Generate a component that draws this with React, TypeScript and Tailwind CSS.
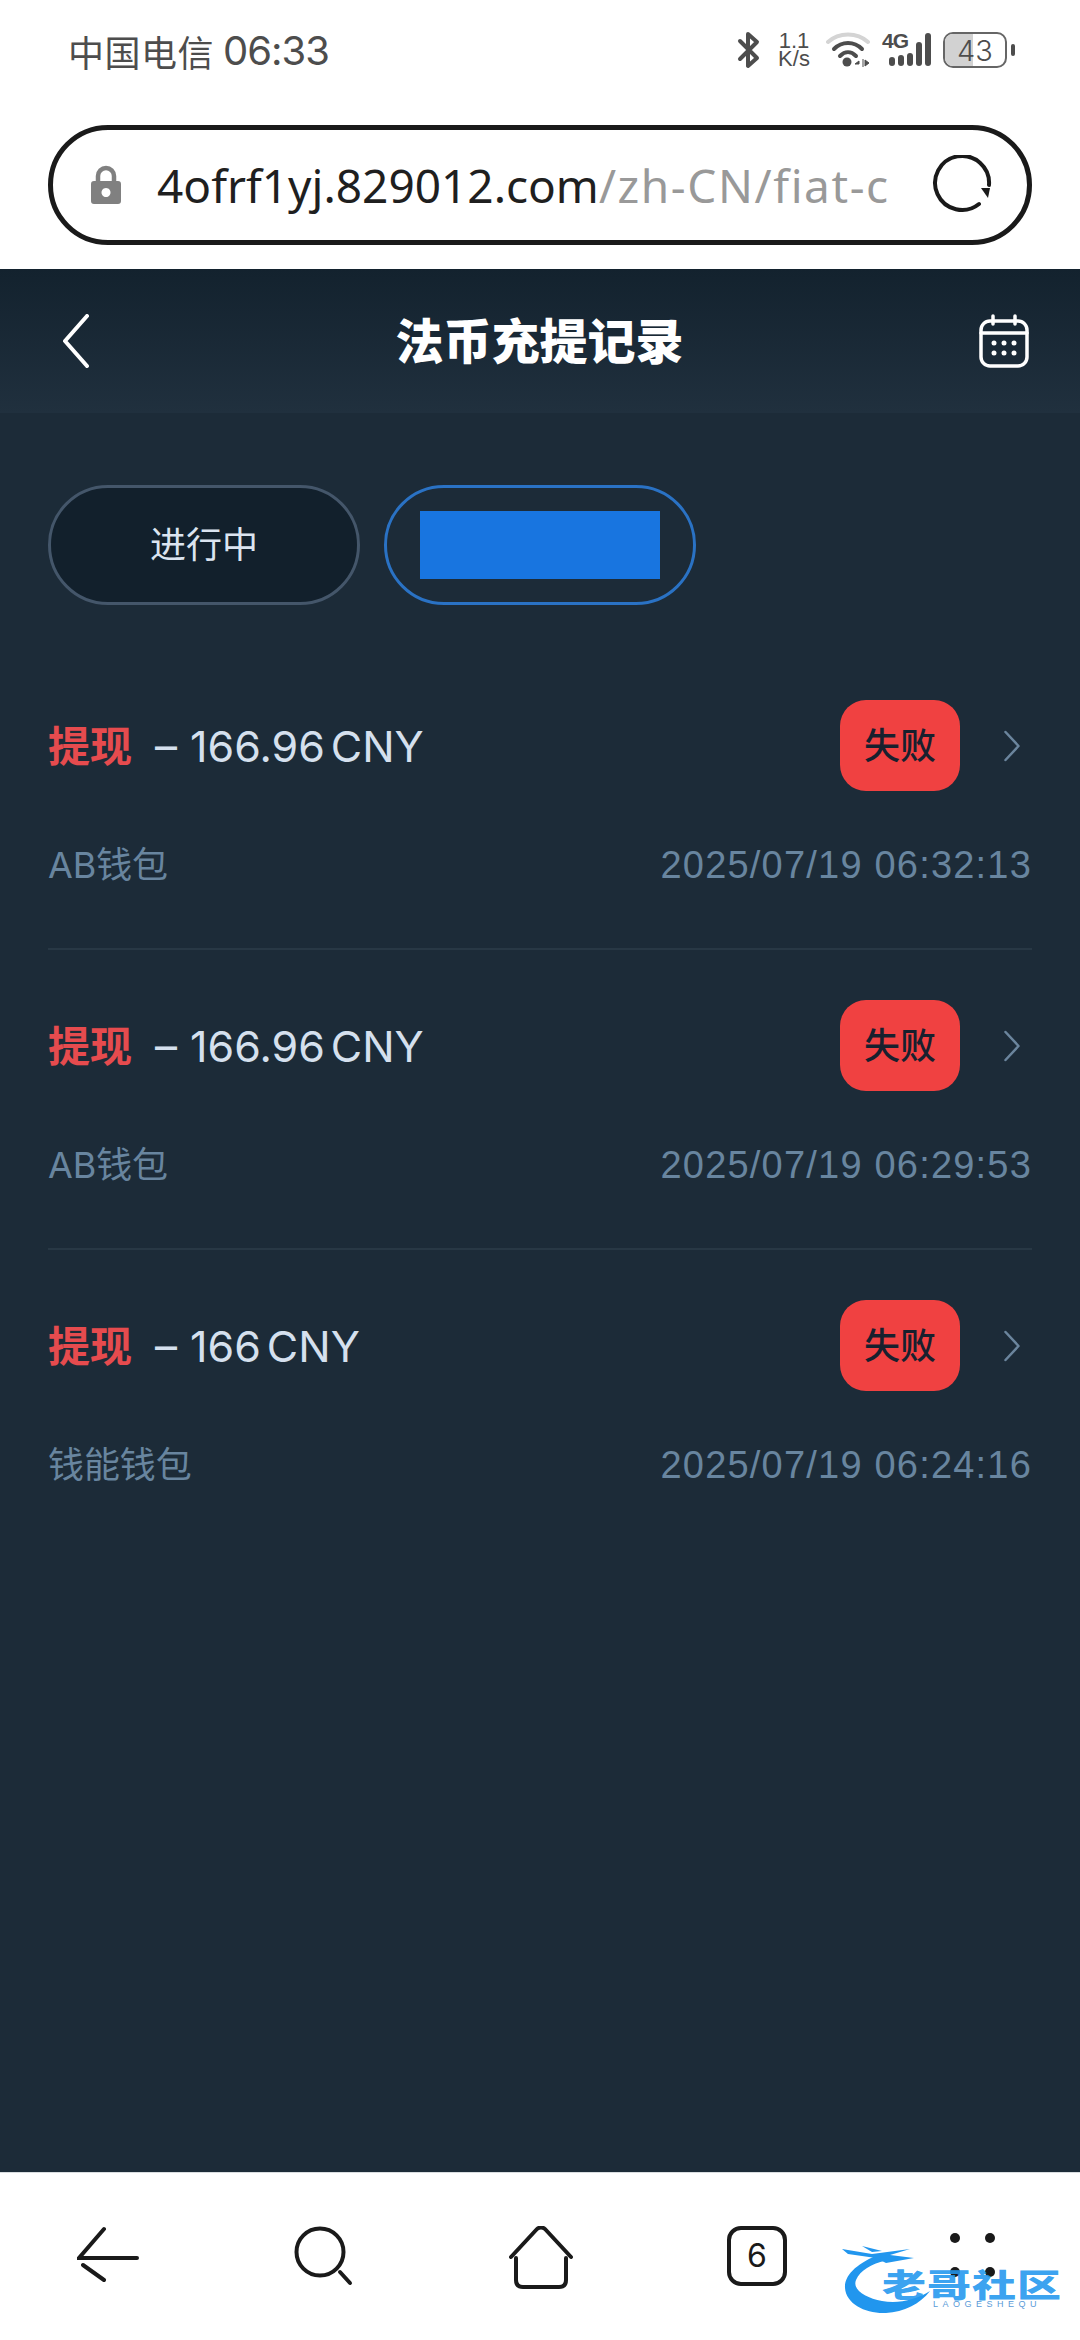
const records = [
  { amount: "166.96", wallet: "AB钱包", time: "2025/07/19 06:32:13" },
  { amount: "166.96", wallet: "AB钱包", time: "2025/07/19 06:29:53" },
  { amount: "166", wallet: "钱能钱包", time: "2025/07/19 06:24:16" },
];

function StatusBar() {
  return (
    <div className="h-[125px] flex items-start justify-between pl-[68px] pr-[65px] pt-[26px] text-[#4d4d4d]">
      <div className="flex items-center h-[50px] gap-[10px] font-['Noto_Sans_CJK_SC',sans-serif] text-[36px] leading-[50px] tracking-[0.5px]">
        <span>中国电信</span>
        <span className="font-['Inter',sans-serif] text-[40px] -ml-[1px] tracking-[-1px]">06:33</span>
      </div>
      <div className="flex items-center h-[50px] -mt-[1px]">
        <svg width="24" height="38" viewBox="0 0 24 38" fill="none" stroke="#4d4d4d" strokeWidth="4" strokeLinejoin="round" strokeLinecap="round">
          <path d="M3 10 L20 27 L11 35 V3 L20 11 L3 28" />
        </svg>
        <div className="ml-[15px] w-[36px] flex flex-col items-center font-['Liberation_Sans',sans-serif] text-[22px] leading-[18px]">
          <span>1.1</span>
          <span>K/s</span>
        </div>
        <svg className="ml-[14px]" width="44" height="36" viewBox="0 0 44 36" fill="none">
          <path d="M2 10 C13 0 31 0 42 10" stroke="#d4d4d4" strokeWidth="4" strokeLinecap="round" />
          <path d="M8 17 C16 9 28 9 36 17" stroke="#4d4d4d" strokeWidth="4" strokeLinecap="round" />
          <path d="M14 24 C19 19 25 19 30 24" stroke="#4d4d4d" strokeWidth="4" strokeLinecap="round" />
          <circle cx="21" cy="30" r="4.5" fill="#4d4d4d" />
          <path d="M33 29 L29 32 H33 Z M37 27 V35 M39 28 L43 31 L39 34 Z" fill="#4d4d4d" stroke="#4d4d4d" strokeWidth="1" />
        </svg>
        <div className="ml-[12px] relative w-[50px] h-[36px]">
          <span className="absolute left-0 -top-[2px] font-['Liberation_Sans',sans-serif] font-bold text-[21px] leading-[22px] tracking-[-1px]">4G</span>
          <svg className="absolute left-0 top-0" width="50" height="36" viewBox="0 0 50 36" fill="#4d4d4d">
            <rect x="7" y="25" width="6" height="9" rx="3" />
            <rect x="16" y="23" width="6" height="11" rx="3" />
            <rect x="25" y="21" width="6" height="13" rx="3" />
            <rect x="34" y="10" width="6" height="24" rx="3" />
            <rect x="43" y="1" width="6" height="33" rx="3" />
          </svg>
        </div>
        <div className="ml-[11px] relative w-[64px] h-[36px] rounded-[10px] border-[2px] border-[#666666] overflow-hidden flex items-center justify-center">
          <div className="absolute left-0 top-0 bottom-0 w-[46%] bg-[#d2d2d2]"></div>
          <span className="relative font-['Inter',sans-serif] font-light text-[29px] leading-none">43</span>
        </div>
        <div className="ml-[4px] w-[4px] h-[12px] rounded-full bg-[#4d4d4d]"></div>
      </div>
    </div>
  );
}

function UrlBar() {
  return (
    <div className="h-[144px] px-[48px]">
      <div className="h-[120px] rounded-[60px] border-[5px] border-[#1a1a1a] flex items-center pl-[38px] pr-[35px]">
        <svg width="30" height="40" viewBox="0 0 30 40" className="shrink-0">
          <path d="M7 18 V11 a8 8 0 0 1 16 0 V18" fill="none" stroke="#808080" strokeWidth="4.5" />
          <path fillRule="evenodd" d="M3 16 H27 a3 3 0 0 1 3 3 V36 a3 3 0 0 1 -3 3 H3 a3 3 0 0 1 -3 -3 V19 a3 3 0 0 1 3 -3 Z M15 23 a4.5 4.5 0 1 0 0.01 0 Z" fill="#808080" />
        </svg>
        <div className="ml-[36px] w-[731px] overflow-hidden whitespace-nowrap font-['Noto_Sans',sans-serif] text-[46px] leading-[60px] text-[#1f1f1f]">
          4ofrf1yj.829012.com<span className="text-[#999999] tracking-[1.6px]">/zh-CN/fiat-crypto</span>
        </div>
        <svg className="ml-auto shrink-0" width="60" height="60" viewBox="0 0 60 60" fill="none">
          <path d="M47 49 A27 27 0 1 1 57 30" stroke="#1a1a1a" strokeWidth="4" strokeLinecap="round" />
          <path d="M49 33 L58 33 L56 43 Z" fill="#1a1a1a" />
        </svg>
      </div>
    </div>
  );
}

function Header() {
  return (
    <div className="h-[144px] bg-linear-to-b from-[#13222e] to-[#20303e] flex items-center justify-between pl-[62px] pr-[51px]">
      <svg width="28" height="54" viewBox="0 0 28 54" fill="none" stroke="#ffffff" strokeWidth="4" strokeLinecap="round" strokeLinejoin="round">
        <path d="M25 2 L3 27 L25 52" />
      </svg>
      <h1 className="font-['Noto_Sans_CJK_SC',sans-serif] font-black text-[48px] leading-[60px] text-white -mt-[7px] ml-[10px]">法币充提记录</h1>
      <svg width="50" height="54" viewBox="0 0 50 54" fill="none" stroke="#ffffff" strokeWidth="3.5" strokeLinecap="round">
        <rect x="2" y="7" width="46" height="45" rx="9" />
        <path d="M2 19 H48 M14 2 V10 M36 2 V10" />
        <g fill="#ffffff" stroke="none">
          <circle cx="15" cy="29" r="2.5" /><circle cx="25" cy="29" r="2.5" /><circle cx="35" cy="29" r="2.5" />
          <circle cx="15" cy="39" r="2.5" /><circle cx="25" cy="39" r="2.5" /><circle cx="35" cy="39" r="2.5" />
        </g>
      </svg>
    </div>
  );
}

function Row({ amount, wallet, time }: { amount: string; wallet: string; time: string }) {
  return (
    <div className="pb-[59px] mb-[50px] border-b-2 border-[#283845] last:border-b-0">
      <div className="flex items-center h-[91px]">
        <span className="font-['Noto_Sans_CJK_SC',sans-serif] font-bold text-[42px] leading-[50px] -mt-[4px] text-[#e64b4e]">提现</span>
        <div className="ml-[25px] flex items-center font-['Inter',sans-serif] text-[43px] leading-[50px] text-[#d5e0ee]">
          <span className="w-[33px] text-[44px] -ml-[2px] mr-[2px]">–</span>
          <span>{amount}</span>
          <span className="ml-[6px]">CNY</span>
        </div>
        <div className="ml-auto w-[120px] h-[91px] rounded-[26px] bg-[#f04141] flex items-center justify-center">
          <span className="font-['Noto_Sans_CJK_SC',sans-serif] font-medium text-[36px] leading-[50px] -mt-[5px] text-[#18202e]">失败</span>
        </div>
        <svg className="ml-[44px] mr-[12px]" width="16" height="32" viewBox="0 0 16 32" fill="none" stroke="#6b859d" strokeWidth="2.5" strokeLinecap="round" strokeLinejoin="round">
          <path d="M1.5 2 L14.5 16 L1.5 30" />
        </svg>
      </div>
      <div className="mt-[48px] flex items-center justify-between h-[50px] text-[#68859f]">
        <span className="font-['Inter','Noto_Sans_CJK_SC',sans-serif] text-[36px] leading-[50px] mt-[2px] tracking-[-0.1px]">{wallet}</span>
        <span className="font-['Liberation_Sans',sans-serif] text-[38px] leading-[50px] mt-[2px] tracking-[1.2px]">{time}</span>
      </div>
    </div>
  );
}

function BottomBar() {
  return (
    <div className="relative h-[168px] bg-white border-t border-[#d8dde0]">
      <div className="h-full flex items-start pt-[53px] pl-[77px]">
        <svg width="62" height="56" viewBox="0 0 62 56" fill="none" stroke="#1a1a1a" strokeWidth="4" strokeLinecap="round">
          <path d="M27 3 L2 32 H60 M6 39 L27 54" />
        </svg>
        <svg className="ml-[155px]" width="60" height="60" viewBox="0 0 60 60" fill="none" stroke="#1a1a1a" strokeWidth="4" strokeLinecap="round">
          <circle cx="26" cy="26" r="23.5" />
          <path d="M46 46 L56 57" />
        </svg>
        <svg className="ml-[154px]" width="66" height="64" viewBox="0 0 66 64" fill="none" stroke="#1a1a1a" strokeWidth="4" strokeLinecap="round" strokeLinejoin="round">
          <path d="M3 31 L29 3 Q33 0 37 3 L63 31" />
          <path d="M8 32 V54 Q8 61 15 61 H51 Q58 61 58 54 V32" />
        </svg>
        <div className="ml-[153px] w-[60px] h-[60px] rounded-[14px] border-[4px] border-[#1a1a1a] flex items-center justify-center font-['Inter',sans-serif] text-[32px] text-[#1a1a1a]">
          6
        </div>
        <div className="ml-[163px] mt-[7px] grid grid-cols-2 gap-x-[25px] gap-y-[24px]">
          <div className="w-[10px] h-[10px] rounded-full bg-[#1a1a1a]"></div>
          <div className="w-[10px] h-[10px] rounded-full bg-[#1a1a1a]"></div>
          <div className="w-[10px] h-[10px] rounded-full bg-[#1a1a1a]"></div>
          <div className="w-[10px] h-[10px] rounded-full bg-[#1a1a1a]"></div>
        </div>
      </div>
      {/* watermark */}
      <div className="absolute left-[842px] top-[73px] w-[225px] h-[72px]">
        <svg className="absolute left-0 top-0" width="95" height="70" viewBox="0 0 95 70" fill="#2196ee">
          <path d="M36 9 C18 16 2 28 3 42 C4 58 24 68 44 67 C62 66 78 58 88 45 C74 54 56 58 40 55 C24 52 10 44 14 34 C18 24 30 18 42 15 Z" />
          <path d="M0 3 L30 8 L68 3 L48 9 L72 12 L44 17 L34 12 L6 8 Z" />
          <path d="M20 0 L40 5 L30 6 Z" />
        </svg>
        <div className="absolute left-[40px] top-[12px] origin-center scale-y-[0.72] font-['Noto_Sans_CJK_SC',sans-serif] font-black text-[44px] leading-[50px] text-[#2196ee]/90 tracking-[1px] whitespace-nowrap">
          老哥社区
        </div>
        <div className="absolute left-[91px] top-[53px] font-['Liberation_Sans',sans-serif] text-[9px] leading-[10px] text-[#5a9bd8] tracking-[4.5px] whitespace-nowrap">
          LAOGESHEQU
        </div>
      </div>
    </div>
  );
}

export default function App() {
  return (
    <div className="w-[1080px] h-[2340px] bg-white flex flex-col overflow-hidden font-['Inter','Noto_Sans_CJK_SC',sans-serif]">
      <StatusBar />
      <UrlBar />
      <Header />
      <div className="flex-1 bg-[#1c2b38] px-[48px] pt-[72px]">
        <div className="flex gap-[24px]">
          <button className="w-[312px] h-[120px] rounded-[60px] bg-[#12202c] border-[3px] border-[#44566a] flex items-center justify-center">
            <span className="font-['Noto_Sans_CJK_SC',sans-serif] text-[36px] leading-[50px] -mt-[6px] text-[#dbe4f0]">进行中</span>
          </button>
          <button className="w-[312px] h-[120px] rounded-[60px] bg-[#1c2b38] border-[3px] border-[#2a72c4] flex items-center justify-center">
            <span className="block w-[240px] h-[68px] bg-[#1875e0]"></span>
          </button>
        </div>
        <div className="mt-[95px]">
          {records.map((r) => (
            <Row key={r.time} amount={r.amount} wallet={r.wallet} time={r.time} />
          ))}
        </div>
      </div>
      <BottomBar />
    </div>
  );
}
